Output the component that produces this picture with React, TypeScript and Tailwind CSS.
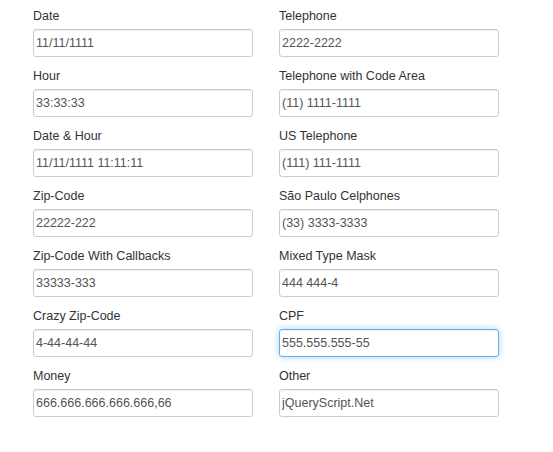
import React from 'react';

type Field = { label: string; value: string; focused?: boolean };

const fields: Field[] = [
  { label: 'Date', value: '11/11/1111' },
  { label: 'Telephone', value: '2222-2222' },
  { label: 'Hour', value: '33:33:33' },
  { label: 'Telephone with Code Area', value: '(11) 1111-1111' },
  { label: 'Date & Hour', value: '11/11/1111 11:11:11' },
  { label: 'US Telephone', value: '(111) 111-1111' },
  { label: 'Zip-Code', value: '22222-222' },
  { label: 'São Paulo Celphones', value: '(33) 3333-3333' },
  { label: 'Zip-Code With Callbacks', value: '33333-333' },
  { label: 'Mixed Type Mask', value: '444 444-4' },
  { label: 'Crazy Zip-Code', value: '4-44-44-44' },
  { label: 'CPF', value: '555.555.555-55', focused: true },
  { label: 'Money', value: '666.666.666.666.666,66' },
  { label: 'Other', value: 'jQueryScript.Net' },
];

const MaskField: React.FC<{ field: Field }> = ({ field }) => (
  <div className="flex flex-col">
    <label className="h-[20px] leading-[20px] mb-[3px] text-[#333] whitespace-nowrap">{field.label}</label>
    <input
      readOnly
      value={field.value}
      className={`h-[28px] w-full rounded-[3px] border bg-white pl-[2px] pr-2 text-[12.5px] text-[#555] outline-none ${
        field.focused
          ? 'border-[#66afe9] shadow-[inset_0_1px_1px_rgba(0,0,0,0.075),0_0_6px_rgba(102,175,233,0.6)]'
          : 'border-[#ccc] shadow-[inset_0_1px_1px_rgba(0,0,0,0.075)]'
      }`}
      style={{ fontFamily: '"Liberation Sans", Arial, sans-serif' }}
    />
  </div>
);

export default function App() {
  return (
    <div
      className="w-[553px] h-[452px] bg-white text-[12.5px]"
      style={{ fontFamily: '"Liberation Sans", Arial, sans-serif' }}
    >
      <div className="grid grid-cols-[220px_220px] gap-x-[26px] gap-y-[9px] pl-[33px] pt-[6px]">
        {fields.map((f) => (
          <MaskField key={f.label} field={f} />
        ))}
      </div>
    </div>
  );
}
